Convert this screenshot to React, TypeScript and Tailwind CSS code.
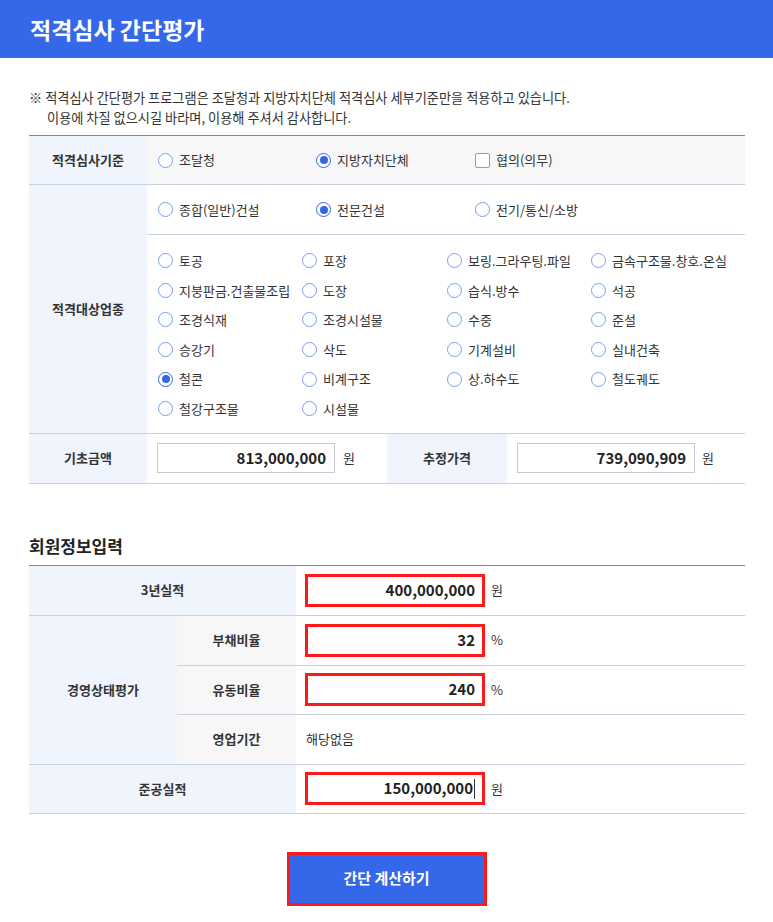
import React from "react";

const FONT = { fontFamily: '"Noto Sans CJK KR", "Noto Sans", sans-serif' };

function Radio({ checked, label }: { checked?: boolean; label: string }) {
  return (
    <div className="flex items-center gap-[6px] whitespace-nowrap">
      {checked ? (
        <span className="flex h-[15px] w-[15px] items-center justify-center rounded-full border-[1.5px] border-[#3366e6] bg-white">
          <span className="h-[8px] w-[8px] rounded-full bg-[#3366e6]" />
        </span>
      ) : (
        <span className="h-[15px] w-[15px] rounded-full border-[1.5px] border-[#7b9ef0] bg-white" />
      )}
      <span className="text-[13px] text-[#333]">{label}</span>
    </div>
  );
}

function Box({ value, red, cursor }: { value: string; red?: boolean; cursor?: boolean }) {
  return (
    <div
      className={
        red
          ? "flex h-[33px] w-[180px] items-center justify-end border-[3px] border-[#ff1a1a] bg-white pr-[7px]"
          : "flex h-[30px] w-[178px] items-center justify-end border border-[#c6ccd6] bg-white pr-[8px]"
      }
    >
      <span className="text-[15px] font-semibold text-[#222]">{value}</span>
      {cursor && <span className="ml-[1px] h-[20px] w-px bg-[#333]" />}
    </div>
  );
}

const grid: (string | null)[][] = [
  ["토공", "포장", "보링.그라우팅.파일", "금속구조물.창호.온실"],
  ["지붕판금.건출물조립", "도장", "습식.방수", "석공"],
  ["조경식재", "조경시설물", "수중", "준설"],
  ["승강기", "삭도", "기계설비", "실내건축"],
  ["철콘", "비계구조", "상.하수도", "철도궤도"],
  ["철강구조물", "시설물", null, null],
];

export default function App() {
  return (
    <div className="min-h-[922px] w-[773px] bg-white text-[#333]" style={FONT}>
      <div className="flex h-[58px] items-center bg-[#3468e8] pl-[30px]">
        <h1 className="text-[23px] font-bold text-white">적격심사 간단평가</h1>
      </div>

      <div className="px-[29px]">
        <div className="mt-[30px] text-[13.2px] leading-[20px] text-[#333]">
          <p>※ 적격심사 간단평가 프로그램은 조달청과 지방자치단체 적격심사 세부기준만을 적용하고 있습니다.</p>
          <p className="pl-[18px]">이용에 차질 없으시길 바라며, 이용해 주셔서 감사합니다.</p>
        </div>

        {/* Table 1 */}
        <div className="mt-[7px] w-[716px] border-t border-[#7d8597]">
          <div className="flex h-[49px] border-b border-[#c8d0df]">
            <div className="flex w-[118px] items-center justify-center bg-[#eff4fd] text-[13px] font-semibold">
              적격심사기준
            </div>
            <div className="flex flex-1 items-center bg-[#f7f7f7] pl-[11px]">
              <div className="w-[158px]">
                <Radio label="조달청" />
              </div>
              <div className="w-[159px]">
                <Radio checked label="지방자치단체" />
              </div>
              <div className="flex items-center gap-[6px]">
                <span className="h-[15px] w-[15px] rounded-[2px] border-[1.5px] border-[#7b9ef0] bg-white" />
                <span className="text-[13px]">협의(의무)</span>
              </div>
            </div>
          </div>

          <div className="flex border-b border-[#c8d0df]">
            <div className="flex w-[118px] items-center justify-center bg-[#eff4fd] text-[13px] font-semibold">
              적격대상업종
            </div>
            <div className="flex-1">
              <div className="flex h-[50px] items-center border-b border-[#c8d0df] pl-[11px]">
                <div className="w-[158px]">
                  <Radio label="종합(일반)건설" />
                </div>
                <div className="w-[159px]">
                  <Radio checked label="전문건설" />
                </div>
                <Radio label="전기/통신/소방" />
              </div>
              <div className="grid grid-cols-[144px_145px_144px_1fr] auto-rows-[29.6px] pb-[9px] pl-[11px] pt-[11px]">
                {grid.flat().map((g, i) =>
                  g ? (
                    <div key={i} className="flex items-center">
                      <Radio label={g} checked={g === "철콘"} />
                    </div>
                  ) : (
                    <div key={i} />
                  )
                )}
              </div>
            </div>
          </div>

          <div className="flex h-[50px] border-b border-[#c8d0df]">
            <div className="flex w-[118px] items-center justify-center bg-[#eff4fd] text-[13px] font-semibold">
              기초금액
            </div>
            <div className="flex w-[240px] items-center gap-[8px] pl-[10px]">
              <Box value="813,000,000" />
              <span className="text-[13px]">원</span>
            </div>
            <div className="flex w-[120px] items-center justify-center bg-[#eff4fd] text-[13px] font-semibold">
              추정가격
            </div>
            <div className="flex flex-1 items-center gap-[7px] pl-[10px]">
              <Box value="739,090,909" />
              <span className="text-[13px]">원</span>
            </div>
          </div>
        </div>

        <h2 className="mt-[50px] text-[17px] font-bold leading-[24px] text-[#222]">회원정보입력</h2>

        {/* Table 2 */}
        <div className="mt-[7px] grid w-[716px] grid-cols-[148px_119px_1fr] grid-rows-[50px_50px_49px_50px_49px] border-t border-[#7d8597]">
          <div className="col-span-2 flex items-center justify-center border-b border-[#c8d0df] bg-[#eff4fd] text-[13px] font-semibold">
            3년실적
          </div>
          <div className="flex items-center gap-[6px] border-b border-[#c8d0df] pl-[9px]">
            <Box red value="400,000,000" />
            <span className="text-[13px]">원</span>
          </div>

          <div className="row-span-3 flex items-center justify-center border-b border-[#c8d0df] bg-[#eff4fd] text-[13px] font-semibold">
            경영상태평가
          </div>
          <div className="flex items-center justify-center border-b border-[#c8d0df] bg-[#f7f7f7] text-[13px] font-semibold">
            부채비율
          </div>
          <div className="flex items-center gap-[6px] border-b border-[#c8d0df] pl-[9px]">
            <Box red value="32" />
            <span className="text-[13px]">%</span>
          </div>
          <div className="flex items-center justify-center border-b border-[#c8d0df] bg-[#f7f7f7] text-[13px] font-semibold">
            유동비율
          </div>
          <div className="flex items-center gap-[6px] border-b border-[#c8d0df] pl-[9px]">
            <Box red value="240" />
            <span className="text-[13px]">%</span>
          </div>
          <div className="flex items-center justify-center border-b border-[#c8d0df] bg-[#f7f7f7] text-[13px] font-semibold">
            영업기간
          </div>
          <div className="flex items-center border-b border-[#c8d0df] pl-[10px] text-[13px]">해당없음</div>

          <div className="col-span-2 flex items-center justify-center border-b border-[#c8d0df] bg-[#eff4fd] text-[13px] font-semibold">
            준공실적
          </div>
          <div className="flex items-center gap-[6px] border-b border-[#c8d0df] pl-[9px]">
            <Box red cursor value="150,000,000" />
            <span className="text-[13px]">원</span>
          </div>
        </div>

        <div className="mt-[38px] flex justify-center">
          <button className="flex h-[54px] w-[200px] items-center justify-center border-[3px] border-[#ff1a1a] bg-[#3468e8] text-[15px] font-bold text-white">
            간단 계산하기
          </button>
        </div>
      </div>
    </div>
  );
}
